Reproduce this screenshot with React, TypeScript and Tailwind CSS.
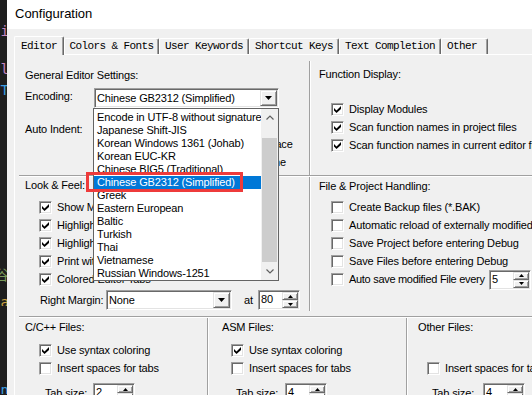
import React from 'react';

// classic 3D edges
const sunken =
  'border border-t-[#a0a0a0] border-l-[#a0a0a0] border-r-white border-b-white shadow-[inset_1px_1px_0_#696969,inset_-1px_-1px_0_#e3e3e3]';
const raised =
  'border border-t-[#e3e3e3] border-l-[#e3e3e3] border-r-[#696969] border-b-[#696969] bg-[#f0f0f0] shadow-[inset_1px_1px_0_#ffffff,inset_-1px_-1px_0_#a0a0a0]';
const hLine = 'h-[2px] shrink-0 border-t border-b border-t-[#a0a0a0] border-b-white';
const vLine = 'w-[2px] shrink-0 border-l border-r border-l-[#a0a0a0] border-r-white';

const encodings = [
    'Encode in UTF-8 without signature',
    'Japanese Shift-JIS',
    'Korean Windows 1361 (Johab)',
    'Korean EUC-KR',
    'Chinese BIG5 (Traditional)',
    'Chinese GB2312 (Simplified)',
    'Greek',
    'Eastern European',
    'Baltic',
    'Turkish',
    'Thai',
    'Vietnamese',
    'Russian Windows-1251',
];

const tabs = [
    { label: 'Editor', w: 'w-[50px]' },
    { label: 'Colors & Fonts', w: 'w-[95px]' },
    { label: 'User Keywords', w: 'w-[90px]' },
    { label: 'Shortcut Keys', w: 'w-[90px]' },
    { label: 'Text Completion', w: 'w-[102px]' },
    { label: 'Other', w: 'w-[47px]' },
];

function Check({ checked }: { checked?: boolean }) {
    return (
        <span className={`flex h-[13px] w-[13px] shrink-0 items-center justify-center bg-white ${sunken}`}>
            {checked && (
                <svg width="7" height="7" viewBox="0 0 7 7">
                    <path d="M0 2L2.5 4.5L7 0V3L2.5 7L0 4.5Z" fill="#000" />
                </svg>
            )}
        </span>
    );
}

function CheckRow({ label, checked }: { label: string; checked?: boolean }) {
    return (
        <div className="flex h-[18px] items-center gap-[5px]">
            <Check checked={checked} />
            <span className="leading-[13px]">{label}</span>
        </div>
    );
}

function Triangle({ up, small }: { up?: boolean; small?: boolean }) {
    if (small) {
        return (
            <svg width="5" height="3" viewBox="0 0 5 3">
                <path d={up ? 'M0 3H5L2.5 0Z' : 'M0 0H5L2.5 3Z'} fill="#000" />
            </svg>
        );
    }
    return (
        <svg width="7" height="4" viewBox="0 0 7 4">
            <path d="M0 0H7L3.5 4Z" fill="#000" />
        </svg>
    );
}

function Combo({ value, className = '' }: { value: string; className?: string }) {
    return (
        <div className={`flex h-[20px] items-center bg-white ${sunken} ${className}`}>
            <span className="flex-1 overflow-hidden pl-[2px] leading-[13px]">{value}</span>
            <span className={`mr-[1px] flex h-[16px] w-[17px] items-center justify-center ${raised}`}>
                <Triangle />
            </span>
        </div>
    );
}

function Spin({ value }: { value: string }) {
    return (
        <div className={`flex h-[20px] w-[42px] shrink-0 bg-white ${sunken}`}>
            <span className="flex-1 pl-[2px] pt-[2px] leading-[13px]">{value}</span>
            <div className="my-[1px] mr-[1px] flex w-[16px] flex-col">
                <span className={`flex h-[8px] items-center justify-center ${raised}`}>
                    <Triangle up small />
                </span>
                <span className={`flex h-[8px] items-center justify-center ${raised}`}>
                    <Triangle small />
                </span>
            </div>
        </div>
    );
}

function Chevron({ up }: { up?: boolean }) {
    return (
        <svg width="8" height="5" viewBox="0 0 8 5">
            <path d={up ? 'M0.5 4.5L4 1L7.5 4.5' : 'M0.5 0.5L4 4L7.5 0.5'} stroke="#606060" strokeWidth="1.2" fill="none" />
        </svg>
    );
}

function EncodingList() {
    return (
        <div className="absolute left-[-1px] top-full z-20 flex h-[173px] w-[186px] border border-[#646464] bg-white">
            <div className="flex-1 pt-[2px]">
                {encodings.map((e, i) => (
                    <div
                        key={e}
                        className={`h-[13px] pl-[3px] leading-[13px] ${i === 5 ? 'bg-[#0078d7] text-white' : ''}`}
                    >
                        {e}
                    </div>
                ))}
            </div>
            <div className="flex w-[17px] flex-col bg-[#f0f0f0]">
                <div className="flex h-[17px] items-center justify-center">
                    <Chevron up />
                </div>
                <div className="flex-1 px-[1px]">
                    <div className="mt-[12px] h-[124px] bg-[#cdcdcd]" />
                </div>
                <div className="flex h-[17px] items-center justify-center">
                    <Chevron />
                </div>
            </div>
        </div>
    );
}

function Glyph({ h, color, children }: { h: string; color: string; children: React.ReactNode }) {
    return (
        <div className={`flex justify-end overflow-hidden ${h}`}>
            <span className={`-mr-[2px] leading-none ${color}`}>{children}</span>
        </div>
    );
}

// the code editor peeking out behind the dialog
function EditorStrip() {
    return (
        <div className="flex w-[7px] shrink-0 flex-col overflow-hidden bg-[#1e1e1e] font-['DejaVu_Sans_Mono','Noto_Sans_CJK_SC',monospace] text-[14px] tracking-normal">
            <div className="h-[24px] shrink-0" />
            <Glyph h="h-[15px]" color="text-[#c586c0]">i</Glyph>
            <div className="h-[23px] shrink-0" />
            <Glyph h="h-[18px]" color="text-[#c586c0]">l</Glyph>
            <div className="h-[3px] shrink-0" />
            <Glyph h="h-[14px]" color="text-[#3b9ce0]">T</Glyph>
            <div className="h-[171px] shrink-0" />
            <Glyph h="h-[16px]" color="text-[#7a9a5a]">谷</Glyph>
            <div className="h-[11px] shrink-0" />
            <Glyph h="h-[11px]" color="text-[#c8a040]">a</Glyph>
            <div className="h-[77px] shrink-0" />
            <Glyph h="h-[11px]" color="text-[#3b9ce0]">n</Glyph>
        </div>
    );
}

function TabStrip() {
    return (
        <div className="relative z-10 flex h-[18px] shrink-0 items-end font-['Liberation_Mono',monospace] text-[11px] tracking-[-0.6px]">
            {tabs.map((t, i) =>
                i === 0 ? (
                    <div
                        key={t.label}
                        className={`-mb-px flex h-[19px] ${t.w} shrink-0 items-center justify-center rounded-t-[2px] border-l border-r border-t border-l-white border-t-white border-r-[#696969] bg-[#f0f0f0] shadow-[inset_-1px_0_0_#a0a0a0]`}
                    >
                        {t.label}
                    </div>
                ) : (
                    <div
                        key={t.label}
                        className={`flex h-[16px] ${t.w} shrink-0 items-center rounded-t-[2px] border-l border-r border-t border-l-white border-t-white border-r-[#696969] bg-[#f0f0f0] shadow-[inset_-1px_0_0_#a0a0a0] ${t.label === 'Other' ? 'pl-[5px]' : 'justify-center'}`}
                    >
                        {t.label}
                    </div>
                ),
            )}
        </div>
    );
}

export default function App() {
    return (
        <div className="relative flex h-[395px] w-[532px] overflow-hidden whitespace-nowrap bg-[#f0f0f0] font-['Liberation_Sans',Arial,sans-serif] text-[11px] tracking-[-0.15px] text-black">
            <EditorStrip />

            <div className="flex min-w-0 flex-1 flex-col">
                {/* Title bar */}
                <div className="h-[29px] shrink-0 bg-white pl-[8px] pt-[6px] text-[13px] leading-[15px] tracking-normal">
                    Configuration
                </div>

                <div className="flex min-h-0 flex-1 flex-col pl-[7px] pt-[7px]">
                    <TabStrip />

                    <div className="flex min-h-0 flex-1 flex-col border-l border-t border-white">
                        {/* General editor / Function display */}
                        <div className="flex h-[120px] shrink-0">
                            <div className="w-[294px] shrink-0 pl-[10px] pt-[13.5px]">
                                <div className="leading-[13px]">General Editor Settings:</div>
                                <div className="mt-[6.5px] flex items-start">
                                    <div className="w-[69px] shrink-0 pt-[1.5px] leading-[13px]">Encoding:</div>
                                    <div className="relative">
                                        <Combo value="Chinese GB2312 (Simplified)" className="w-[185px]" />
                                        <EncodingList />
                                    </div>
                                </div>
                                <div className="mt-[9px] flex items-start">
                                    <div className="w-[69px] shrink-0 pt-[5.5px] leading-[13px]">Auto Indent:</div>
                                    <Combo value="Smart" className="mt-[2px] w-[80px]" />
                                    <div className="ml-[14px] flex flex-col">
                                        <CheckRow label="Virtual Spaces" />
                                        <CheckRow label="View White Space" />
                                        <CheckRow label="View End of Line" />
                                    </div>
                                </div>
                            </div>
                            <div className={`${vLine} mt-[6px] h-[114px]`} />
                            <div className="min-w-0 flex-1 pl-[8px] pt-[12.5px]">
                                <div className="leading-[13px]">Function Display:</div>
                                <div className="mt-[19.5px] pl-[12px]">
                                    <CheckRow label="Display Modules" checked />
                                    <CheckRow label="Scan function names in project files" checked />
                                    <CheckRow label="Scan function names in current editor files" checked />
                                </div>
                            </div>
                        </div>

                        <div className={`${hLine} ml-[4px]`} />

                        {/* Look & feel / File & project handling */}
                        <div className="flex h-[139px] shrink-0">
                            <div className="w-[294px] shrink-0 pl-[10px] pt-[1.5px]">
                                <div className="leading-[13px]">Look &amp; Feel:</div>
                                <div className="mt-[6.5px] pl-[14px]">
                                    <CheckRow label="Show Message Dialog during Find in Files" checked />
                                    <CheckRow label="Highlight Current Line" checked />
                                    <CheckRow label="Highlight matching Braces" checked />
                                    <CheckRow label="Print with syntax coloring" checked />
                                    <CheckRow label="Colored Editor Tabs" checked />
                                </div>
                                <div className="mt-[2px] flex items-center pl-[15px]">
                                    <span className="w-[66px] shrink-0 leading-[13px]">Right Margin:</span>
                                    <Combo value="None" className="w-[126px]" />
                                    <span className="ml-[12px] w-[14px] shrink-0 leading-[13px]">at</span>
                                    <Spin value="80" />
                                </div>
                            </div>
                            <div className={`${vLine} h-[134px]`} />
                            <div className="min-w-0 flex-1 pl-[8px] pt-[2.5px]">
                                <div className="leading-[13px]">File &amp; Project Handling:</div>
                                <div className="mt-[6px] pl-[12px]">
                                    <CheckRow label="Create Backup files (*.BAK)" />
                                    <CheckRow label="Automatic reload of externally modified files" />
                                    <CheckRow label="Save Project before entering Debug" />
                                    <CheckRow label="Save Files before entering Debug" />
                                    <div className="flex h-[18px] items-center gap-[5px]">
                                        <Check />
                                        <span className="w-[135px] shrink-0 leading-[13px] tracking-[-0.3px]">Auto save modified File every</span>
                                        <Spin value="5" />
                                    </div>
                                </div>
                            </div>
                        </div>

                        <div className={`${hLine} ml-[4px]`} />

                        {/* File types */}
                        <div className="flex min-h-0 flex-1">
                            <div className="w-[192px] shrink-0 pl-[10px] pt-[2.5px]">
                                <div className="leading-[13px]">C/C++ Files:</div>
                                <div className="mt-[7.5px] pl-[14px]">
                                    <CheckRow label="Use syntax coloring" checked />
                                    <CheckRow label="Insert spaces for tabs" />
                                </div>
                                <div className="mt-[6px] flex items-center pl-[20px]">
                                    <span className="w-[48px] shrink-0 leading-[13px]">Tab size:</span>
                                    <Spin value="2" />
                                </div>
                            </div>
                            <div className={vLine} />
                            <div className="w-[197px] shrink-0 pl-[13px] pt-[2.5px]">
                                <div className="leading-[13px]">ASM Files:</div>
                                <div className="mt-[7.5px] pl-[9px]">
                                    <CheckRow label="Use syntax coloring" checked />
                                    <CheckRow label="Insert spaces for tabs" />
                                </div>
                                <div className="mt-[6px] flex items-center pl-[14px]">
                                    <span className="w-[49px] shrink-0 leading-[13px]">Tab size:</span>
                                    <Spin value="4" />
                                </div>
                            </div>
                            <div className={vLine} />
                            <div className="min-w-0 flex-1 pl-[10px] pt-[2.5px]">
                                <div className="leading-[13px]">Other Files:</div>
                                <div className="mt-[7.5px] pl-[9px]">
                                    <div className="h-[18px]" />
                                    <CheckRow label="Insert spaces for tabs" />
                                </div>
                                <div className="mt-[6px] flex items-center pl-[14px]">
                                    <span className="w-[51px] shrink-0 leading-[13px]">Tab size:</span>
                                    <Spin value="4" />
                                </div>
                            </div>
                        </div>
                    </div>
                </div>
            </div>

            {/* red highlight drawn over the screenshot */}
            <div className="pointer-events-none absolute left-[86px] top-[172px] z-30 h-[20px] w-[157px] border-[3px] border-[#ee3b3b]" />
        </div>
    );
}
